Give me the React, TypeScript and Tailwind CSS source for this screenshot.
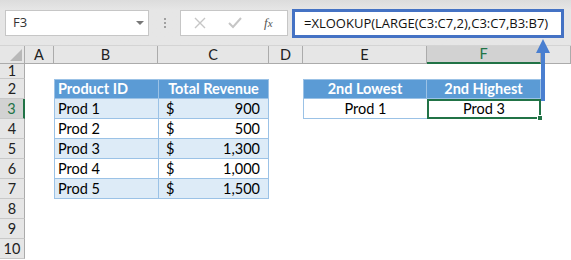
import React from 'react';

const cols = [
  { key: 'A', w: 'w-[29px]' },
  { key: 'B', w: 'w-[104px]' },
  { key: 'C', w: 'w-[111px]' },
  { key: 'D', w: 'w-[34px]' },
  { key: 'E', w: 'w-[124px]' },
  { key: 'F', w: 'w-[114px]' },
  { key: 'G', w: 'flex-1' },
];

const products = [
  { id: 'Prod 1', rev: '900' },
  { id: 'Prod 2', rev: '500' },
  { id: 'Prod 3', rev: '1,300' },
  { id: 'Prod 4', rev: '1,000' },
  { id: 'Prod 5', rev: '1,500' },
];

const cellFont = { fontFamily: 'Lato, "Liberation Sans", sans-serif' };

function RowHead({ n, h, selected }: { n: number; h: string; selected?: boolean }) {
  return (
    <div
      className={`w-[25px] ${h} shrink-0 flex items-center justify-center text-[14.5px] border-b border-[#c8c8c8] ${
        selected
          ? 'bg-[#d2d2d2] text-[#217346] border-r-2 border-r-[#217346]'
          : 'bg-[#e6e6e6] text-[#222] border-r border-r-[#ababab]'
      }`}
      style={cellFont}
    >
      {n}
    </div>
  );
}

export default function App() {
  return (
    <div className="relative w-[571px] h-[260px] overflow-hidden bg-white text-black" style={cellFont}>
      {/* Formula bar */}
      <div className="h-[46px] border-b border-[#d4d4d4] flex items-start pt-[9px] bg-gradient-to-b from-[#dcdcdc] to-[#e6e6e6] to-[10px]">
        <div className="ml-[5px] w-[144px] h-[26px] mt-[1px] bg-white border border-[#c6c6c6] flex items-center justify-between pl-[7px] pr-[4px]">
          <span className="text-[13px] text-[#333]" style={{ fontFamily: '"Open Sans", sans-serif' }}>F3</span>
          <span className="w-0 h-0 border-l-[4px] border-r-[4px] border-t-[4px] border-l-transparent border-r-transparent border-t-[#777]" />
        </div>
        <div className="w-[31px] h-[27px] flex flex-col items-center justify-center gap-[2px]">
          <span className="w-[2px] h-[2px] bg-[#a0a0a0]" />
          <span className="w-[2px] h-[2px] bg-[#a0a0a0]" />
          <span className="w-[2px] h-[2px] bg-[#a0a0a0]" />
        </div>
        <div className="w-[108px] h-[26px] mt-[1px] bg-white border border-[#c6c6c6] flex items-center">
          <svg width="12" height="12" viewBox="0 0 12 12" className="ml-[13px]">
            <path d="M1 1 L11 11 M11 1 L1 11" stroke="#c6c6c6" strokeWidth="1.4" fill="none" />
          </svg>
          <svg width="14" height="12" viewBox="0 0 14 12" className="ml-[22px]">
            <path d="M1 6 L5 10 L13 1" stroke="#c6c6c6" strokeWidth="2" fill="none" />
          </svg>
          <span className="ml-[22px] text-[13px] italic text-[#555]" style={{ fontFamily: '"Liberation Serif", serif' }}>
            f<span className="text-[11px]">x</span>
          </span>
        </div>
        <div
          className="ml-[4px] w-[272px] h-[29px] bg-white border-[3px] border-[#4472c4] flex items-center pl-[9px] text-[13px] text-[#111]"
          style={{ fontFamily: '"Open Sans", sans-serif' }}
        >
          =XLOOKUP(LARGE(C3:C7,2),C3:C7,B3:B7)
        </div>
      </div>

      {/* Column headers */}
      <div className="flex h-[18px] bg-[#e6e6e6]">
        <div className="w-[25px] shrink-0 border-r border-[#ababab] border-b border-b-[#ababab] flex items-end justify-end pr-[2px] pb-[2px]">
          <svg width="12" height="12" viewBox="0 0 12 12">
            <path d="M12 0 L12 12 L0 12 Z" fill="#b8b8b8" />
          </svg>
        </div>
        {cols.map((c) =>
          c.key === 'F' ? (
            <div
              key={c.key}
              className={`${c.w} shrink-0 bg-[#d2d2d2] border-r border-[#ababab] border-b-2 border-b-[#217346] flex items-center justify-center text-[14.5px] text-[#217346]`}
            >
              {c.key}
            </div>
          ) : (
            <div
              key={c.key}
              className={`${c.w} shrink-0 border-r border-[#ababab] border-b border-b-[#ababab] flex items-center justify-center text-[14.5px] text-[#222]`}
            >
              {c.key === 'G' ? '' : c.key}
            </div>
          )
        )}
      </div>

      {/* Row 1 */}
      <div className="flex">
        <RowHead n={1} h="h-[15px]" />
      </div>

      {/* Rows 2-10 */}
      {[2, 3, 4, 5, 6, 7, 8, 9, 10].map((r) => {
        const p = products[r - 3];
        const stripe = r % 2 === 1 ? 'bg-[#ddebf7]' : 'bg-white';
        return (
          <div key={r} className="flex h-[20px]">
            <RowHead n={r} h="h-[20px]" selected={r === 3} />
            <div className="w-[29px] shrink-0" />
            {r === 2 && (
              <>
                <div className="w-[104px] shrink-0 bg-[#5b9bd5] border border-[#9bc2e6] border-r-0 text-white font-bold text-[14.5px] flex items-center pl-[3px]">
                  Product ID
                </div>
                <div className="w-[111px] shrink-0 bg-[#5b9bd5] border border-[#9bc2e6] text-white font-bold text-[14.5px] flex items-center justify-center">
                  Total Revenue
                </div>
              </>
            )}
            {p && (
              <>
                <div className={`w-[104px] shrink-0 ${stripe} border-l border-b border-[#9bc2e6] text-[14.5px] flex items-center pl-[3px]`}>
                  {p.id}
                </div>
                <div className={`w-[111px] shrink-0 ${stripe} border-x border-b border-[#9bc2e6] text-[14.5px] flex items-center justify-between pl-[7px] pr-[8px]`}>
                  <span>$</span>
                  <span>{p.rev}</span>
                </div>
              </>
            )}
            {!p && r !== 2 && <div className="w-[215px] shrink-0" />}
            <div className="w-[34px] shrink-0" />
            {r === 2 && (
              <>
                <div className="w-[124px] shrink-0 bg-[#5b9bd5] border border-[#9bc2e6] text-white font-bold text-[14.5px] flex items-center justify-center">
                  2nd Lowest
                </div>
                <div className="w-[114px] shrink-0 bg-[#5b9bd5] border-y border-r border-[#9bc2e6] text-white font-bold text-[14.5px] flex items-center justify-center">
                  2nd Highest
                </div>
              </>
            )}
            {r === 3 && (
              <>
                <div className="w-[124px] shrink-0 bg-white border-l border-b border-[#9bc2e6] text-[14.5px] flex items-center justify-center">
                  Prod 1
                </div>
                <div className="relative w-[114px] shrink-0 bg-white border-2 border-[#217346] text-[14.5px] flex items-center justify-center">
                  Prod 3
                  <span className="absolute -right-[4px] -bottom-[4px] w-[6px] h-[6px] bg-[#217346] border border-white" />
                </div>
              </>
            )}
          </div>
        );
      })}

      {/* Arrow pointing up to formula */}
      <svg className="absolute left-[535px] top-[38px]" width="16" height="64" viewBox="0 0 16 64">
        <path d="M8 1 L15 15 L10 15 L10 63 L6 63 L6 15 L1 15 Z" fill="#4a7fd0" />
      </svg>
    </div>
  );
}
